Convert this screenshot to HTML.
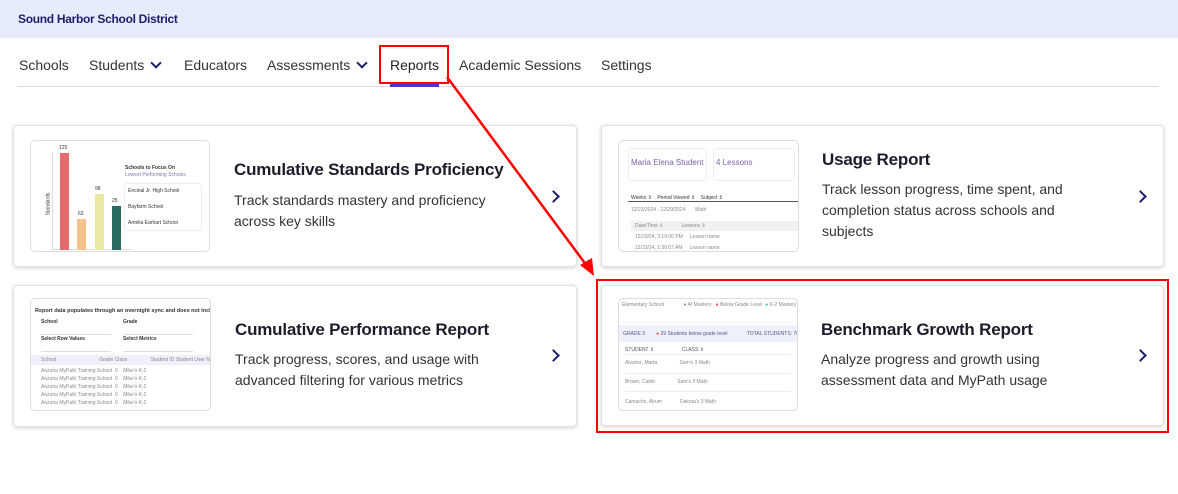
<!DOCTYPE html>
<html><head><style>
*{margin:0;padding:0;box-sizing:border-box}
body{width:1178px;height:494px;background:#fff;font-family:"Liberation Sans",sans-serif;position:relative;overflow:hidden;color:#222}
.hdr{position:absolute;left:0;top:0;width:1178px;height:38px;background:#e7ecfb}
.hdr span{position:absolute;left:18px;top:12px;font-size:12px;font-weight:bold;color:#1f1d6e;letter-spacing:-0.3px}
.nav{position:absolute;top:57px;font-size:14px;color:#333}
.navline{position:absolute;left:18px;top:86px;width:1140px;height:1px;background:#dcdce4}
.chev{display:inline-block;width:8px;height:8px;border-right:2.5px solid #1f1d6e;border-bottom:2.5px solid #1f1d6e;transform:rotate(45deg);margin-left:8px;position:relative;top:-3px}
.card{position:absolute;background:#fff;border:1px solid #e2e2e2;border-radius:4px;box-shadow:0 1px 4px rgba(0,0,0,.18)}
.thumb{position:absolute;border:1px solid #ddd;border-radius:5px;background:#fff;overflow:hidden}
.t{position:absolute;font-size:17px;font-weight:bold;color:#1c1c2a;letter-spacing:-0.2px}
.d{position:absolute;font-size:14px;line-height:21px;color:#333;width:262px}
.arr{position:absolute;width:9px;height:9px;border-right:2.5px solid #1f1d6e;border-top:2.5px solid #1f1d6e;transform:rotate(45deg)}
.row{position:absolute;left:6px;right:6px;height:1px;background:#eee}
.sm{position:absolute;font-size:5px;color:#888;white-space:nowrap}
</style></head><body>
<div class="hdr"><span>Sound Harbor School District</span></div>
<div class="nav" style="left:19px">Schools</div>
<div class="nav" style="left:89px">Students<span class="chev"></span></div>
<div class="nav" style="left:184px">Educators</div>
<div class="nav" style="left:267px">Assessments<span class="chev"></span></div>
<div class="nav" style="left:390px;color:#222">Reports</div>
<div class="nav" style="left:459px">Academic Sessions</div>
<div class="nav" style="left:601px">Settings</div>
<div class="navline"></div>
<div style="position:absolute;left:390px;top:84px;width:49px;height:3px;background:#4a3bc4"></div>
<div style="position:absolute;left:379px;top:45px;width:70px;height:39px;border:2.5px solid #f00"></div>

<div class="card" style="left:13px;top:125px;width:564px;height:142px"></div>
<div class="thumb" style="left:30px;top:140px;width:180px;height:112px">
 <div style="position:absolute;left:21px;top:10px;width:1px;height:100px;background:#ddd"></div>
 <div style="position:absolute;left:20px;top:108px;width:80px;height:1px;background:#ddd"></div>
 <div class="sm" style="left:6px;top:60px;transform:rotate(-90deg);color:#333">Standards</div>
 <div class="sm" style="left:28px;top:4px;color:#333">125</div>
 <div style="position:absolute;left:29px;top:12px;width:9px;height:97px;background:#e46b6e"></div>
 <div class="sm" style="left:47px;top:70px;color:#333">63</div>
 <div style="position:absolute;left:46px;top:78px;width:9px;height:31px;background:#f7c28c"></div>
 <div class="sm" style="left:64px;top:45px;color:#333">98</div>
 <div style="position:absolute;left:64px;top:53px;width:9px;height:56px;background:#ece9a4"></div>
 <div class="sm" style="left:81px;top:57px;color:#333">25</div>
 <div style="position:absolute;left:81px;top:65px;width:9px;height:44px;background:#2b6a60"></div>
 <div class="sm" style="left:94px;top:24px;color:#333;font-weight:bold">Schools to Focus On</div>
 <div class="sm" style="left:94px;top:31px;color:#7a7ab0">Lowest Performing Schools</div>
 <div style="position:absolute;left:93px;top:42px;width:78px;height:48px;border:1px solid #eee;border-radius:3px"></div>
 <div class="sm" style="left:97px;top:47px;color:#333">Encinal Jr. High School</div>
 <div class="sm" style="left:97px;top:63px;color:#333">Bayfarm School</div>
 <div class="sm" style="left:97px;top:79px;color:#333">Amelia Earhart School</div>
</div>
<div class="t" style="left:234px;top:160px">Cumulative Standards Proficiency</div>
<div class="d" style="left:234px;top:190px">Track standards mastery and proficiency across key skills</div>
<div class="arr" style="left:549px;top:192px"></div>

<div class="card" style="left:601px;top:125px;width:563px;height:142px"></div>
<div class="thumb" style="left:618px;top:140px;width:181px;height:112px">
 <div style="position:absolute;left:9px;top:7px;width:79px;height:33px;border:1px solid #eee;border-radius:3px"></div>
 <div style="position:absolute;left:94px;top:7px;width:82px;height:33px;border:1px solid #eee;border-radius:3px"></div>
 <div style="position:absolute;left:12px;top:17px;font-size:8px;color:#7a62a8">Maria Elena Student</div>
 <div style="position:absolute;left:97px;top:17px;font-size:8px;color:#7a62a8">4 Lessons</div>
 <div class="sm" style="left:12px;top:54px;color:#333">Weeks ⇕ &nbsp;&nbsp; Period Viewed ⇕ &nbsp;&nbsp; Subject ⇕</div>
 <div style="position:absolute;left:9px;top:60px;width:170px;height:1px;background:#555"></div>
 <div class="sm" style="left:12px;top:66px">12/23/2024 - 12/29/2024 &nbsp;&nbsp;&nbsp;&nbsp;&nbsp; Math</div>
 <div style="position:absolute;left:12px;top:80px;width:170px;height:10px;background:#f3f0f0"></div>
 <div class="sm" style="left:16px;top:82px">Date/Time ⇕ &nbsp;&nbsp;&nbsp;&nbsp;&nbsp;&nbsp;&nbsp;&nbsp;&nbsp;&nbsp;&nbsp; Lessons ⇕</div>
 <div class="sm" style="left:16px;top:93px">12/23/24, 3:19:00 PM &nbsp;&nbsp;&nbsp; Lesson name</div>
 <div class="sm" style="left:16px;top:104px">12/23/24, 1:30:07 AM &nbsp;&nbsp;&nbsp; Lesson name</div>
</div>
<div class="t" style="left:822px;top:150px">Usage Report</div>
<div class="d" style="left:822px;top:179px;width:255px">Track lesson progress, time spent, and completion status across schools and subjects</div>
<div class="arr" style="left:1136px;top:192px"></div>

<div class="card" style="left:13px;top:285px;width:564px;height:142px"></div>
<div class="thumb" style="left:30px;top:298px;width:181px;height:113px">
 <div class="sm" style="left:4px;top:9px;color:#333;font-weight:bold;font-size:5.5px">Report data populates through an overnight sync and does not include c</div>
 <div class="sm" style="left:10px;top:20px;color:#333;font-weight:bold">School</div>
 <div class="sm" style="left:92px;top:20px;color:#333;font-weight:bold">Grade</div>
 <div style="position:absolute;left:10px;top:28px;width:70px;height:8px;border-bottom:1px solid #ddd"></div>
 <div style="position:absolute;left:92px;top:28px;width:70px;height:8px;border-bottom:1px solid #ddd"></div>
 <div class="sm" style="left:10px;top:37px;color:#333;font-weight:bold">Select Row Values</div>
 <div class="sm" style="left:92px;top:37px;color:#333;font-weight:bold">Select Metrics</div>
 <div style="position:absolute;left:10px;top:45px;width:70px;height:8px;border-bottom:1px solid #ddd"></div>
 <div style="position:absolute;left:92px;top:45px;width:70px;height:8px;border-bottom:1px solid #ddd"></div>
 <div style="position:absolute;left:0;top:56px;width:181px;height:10px;background:#eef0fb"></div>
 <div class="sm" style="left:10px;top:58px">School &nbsp;&nbsp;&nbsp;&nbsp;&nbsp;&nbsp;&nbsp;&nbsp;&nbsp;&nbsp;&nbsp;&nbsp;&nbsp;&nbsp;&nbsp;&nbsp;&nbsp;&nbsp;&nbsp;&nbsp;&nbsp;&nbsp;&nbsp;&nbsp;&nbsp;&nbsp;&nbsp;&nbsp;&nbsp; Grade Class &nbsp;&nbsp;&nbsp;&nbsp;&nbsp;&nbsp;&nbsp;&nbsp;&nbsp;&nbsp;&nbsp;&nbsp;&nbsp;&nbsp;&nbsp; Student ID Student User Nam</div>
 <div class="sm" style="left:10px;top:69px">Arizona MyPath Training School &nbsp;0 &nbsp;&nbsp; Mike's K-2</div>
 <div class="sm" style="left:10px;top:77px">Arizona MyPath Training School &nbsp;0 &nbsp;&nbsp; Mike's K-2</div>
 <div class="sm" style="left:10px;top:85px">Arizona MyPath Training School &nbsp;0 &nbsp;&nbsp; Mike's K-2</div>
 <div class="sm" style="left:10px;top:93px">Arizona MyPath Training School &nbsp;0 &nbsp;&nbsp; Mike's K-2</div>
 <div class="sm" style="left:10px;top:101px">Arizona MyPath Training School &nbsp;0 &nbsp;&nbsp; Mike's K-2</div>
</div>
<div class="t" style="left:235px;top:320px">Cumulative Performance Report</div>
<div class="d" style="left:235px;top:349px;width:270px">Track progress, scores, and usage with advanced filtering for various metrics</div>
<div class="arr" style="left:549px;top:351px"></div>

<div class="card" style="left:601px;top:285px;width:563px;height:141px"></div>
<div class="thumb" style="left:618px;top:298px;width:180px;height:113px">
 <div class="sm" style="left:3px;top:3px">Elementary School &nbsp;&nbsp;&nbsp;&nbsp;&nbsp;&nbsp;&nbsp;&nbsp;&nbsp;&nbsp;&nbsp;&nbsp; ● At Mastery &nbsp; <span style="color:#e44">●</span> Below Grade Level &nbsp;<span style="color:#3bb">●</span> K-2 Mastery</div>
 <div style="position:absolute;left:3px;top:14px;width:170px;height:10px;border-bottom:1px solid #eee"></div>
 <div style="position:absolute;left:0;top:26px;width:180px;height:17px;background:#eef0fb"></div>
 <div class="sm" style="left:4px;top:32px;color:#558">GRADE 3 &nbsp;&nbsp;&nbsp;&nbsp;&nbsp;&nbsp; <span style="color:#e44">●</span> 29 Students below grade level &nbsp;&nbsp;&nbsp;&nbsp;&nbsp;&nbsp;&nbsp;&nbsp;&nbsp;&nbsp;&nbsp;&nbsp; TOTAL STUDENTS: 70</div>
 <div class="sm" style="left:6px;top:48px;color:#555">STUDENT ⇕ &nbsp;&nbsp;&nbsp;&nbsp;&nbsp;&nbsp;&nbsp;&nbsp;&nbsp;&nbsp;&nbsp;&nbsp;&nbsp;&nbsp;&nbsp;&nbsp;&nbsp;&nbsp; CLASS ⇕</div>
 <div class="row" style="top:55px"></div>
 <div class="sm" style="left:6px;top:61px">Alvarez, Marta &nbsp;&nbsp;&nbsp;&nbsp;&nbsp;&nbsp;&nbsp;&nbsp;&nbsp;&nbsp;&nbsp;&nbsp;&nbsp;&nbsp; Sam's 3 Math</div>
 <div class="row" style="top:74px"></div>
 <div class="sm" style="left:6px;top:80px">Brown, Caleb &nbsp;&nbsp;&nbsp;&nbsp;&nbsp;&nbsp;&nbsp;&nbsp;&nbsp;&nbsp;&nbsp;&nbsp;&nbsp;&nbsp; Sam's 3 Math</div>
 <div class="row" style="top:92px"></div>
 <div class="sm" style="left:6px;top:100px">Camacho, Alrum &nbsp;&nbsp;&nbsp;&nbsp;&nbsp;&nbsp;&nbsp;&nbsp;&nbsp;&nbsp;&nbsp; Dakota's 3 Math</div>
</div>
<div class="t" style="left:821px;top:320px">Benchmark Growth Report</div>
<div class="d" style="left:821px;top:349px;width:260px">Analyze progress and growth using assessment data and MyPath usage</div>
<div class="arr" style="left:1136px;top:351px"></div>

<div style="position:absolute;left:596px;top:279px;width:573px;height:154px;border:2.5px solid #f00"></div>
<svg style="position:absolute;left:0;top:0" width="1178" height="494">
 <line x1="447" y1="77" x2="587" y2="266" stroke="#f00" stroke-width="2.5"/>
 <polygon points="594,276 580,265 592,258" fill="#f00"/>
</svg>
</body></html>
